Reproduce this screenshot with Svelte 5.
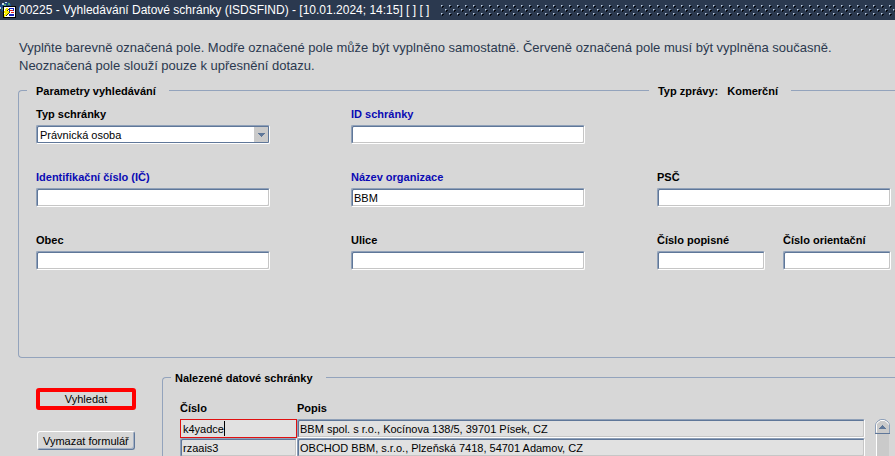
<script>
	let boxType = "Právnická osoba";
	let company = "BBM";

	const results = [
		{ id: "k4yadce", desc: "BBM spol. s r.o., Kocínova 138/5, 39701 Písek, CZ" },
		{ id: "rzaais3", desc: "OBCHOD BBM, s.r.o., Plzeňská 7418, 54701 Adamov, CZ" },
	];
	let selected = 0;

	let fields = { id: "", ic: "", psc: "", city: "", street: "", houseNo: "", orientNo: "" };

	const clearForm = () => {
		company = "";
		fields = { id: "", ic: "", psc: "", city: "", street: "", houseNo: "", orientNo: "" };
	};
</script>

<main>
	<header class="titlebar">
		<svg class="app-icon" width="17" height="20" viewBox="0 0 17 20" shape-rendering="crispEdges">
			<!-- globe -->
			<path d="M1 4h1v-1h2v-1h5v1h1v1h1v3h-6v6h-2v-1h-1v-1h-1v-2h-1v-4h1z" fill="#1d4a86" />
			<path d="M2 3h2v2h-2zM5 2h2v1h-2zM0 7h1v2h-1z" fill="#c9dce6" />
			<path d="M4 4h2v2h-2zM8 3h2v2h-2zM2 8h2v2h-2z" fill="#4f9d6c" />
			<!-- sheet -->
			<rect x="3" y="6" width="13" height="12" fill="#000" />
			<rect x="4" y="7" width="11" height="10" fill="#fff" />
			<path d="M9 8h5v1h-5zM13 9h1v2h-1zM9 9h1v3h-1zM9 14h5v2h-5z" fill="#1824c0" />
			<path d="M10 10h3v1h-3zM11 12h3v1h-3z" fill="#e02020" />
			<!-- flash -->
			<path d="M6 8h2v2h-1v1h2v2h-1v1h-1v1h-1v1h-1v1h-1v-3h1v-1h-1v-2h1v-2h1z" fill="#f8ee00" />
			<path d="M8 9h1v1h-1v1h-1v-1h1zM9 12h1v1h-1v1h-1v1h-1v1h-1v-1h1v-1h1v-1h1z" fill="#4a3c00" />
		</svg>
		<h1>00225 - Vyhledávání Datové schránky (ISDSFIND) - [10.01.2024; 14:15] [ ] [ ]</h1>
		<svg class="grip" width="100%" height="12">
			<defs>
				<pattern id="bumps" width="8" height="12" patternUnits="userSpaceOnUse" shape-rendering="crispEdges">
					<path d="M0 1h1v1h-1zM4 5h1v1h-1zM0 9h1v1h-1z" fill="#c3d0e0" />
					<path d="M1 1h1v1h-1zM0 2h1v1h-1zM5 5h1v1h-1zM4 6h1v1h-1zM1 9h1v1h-1zM0 10h1v1h-1z" fill="#7486a0" />
					<path d="M1 2h2v1h-1v1h-1zM5 6h2v1h-1v1h-1zM1 10h2v1h-1v1h-1z" fill="#05080e" />
				</pattern>
			</defs>
			<rect width="100%" height="12" fill="url(#bumps)" />
		</svg>
	</header>

	<p class="intro">
		Vyplňte barevně označená pole. Modře označené pole může být vyplněno samostatně. Červeně označená pole musí být vyplněna současně.<br />
		Neoznačená pole slouží pouze k upřesnění dotazu.
	</p>

	<section class="group params">
		<div class="caption">
			<h2>Parametry vyhledávání</h2>
			<h2 class="kind"><span>Typ zprávy:</span><span>Komerční</span></h2>
		</div>
		<div class="fields">
			<div class="field">
				<label for="type">Typ schránky</label>
				<div class="combo">
					<select id="type" class="box" bind:value={boxType}>
						<option>Právnická osoba</option>
						<option>Fyzická osoba</option>
					</select>
					<svg class="arrow" width="14" height="15" viewBox="0 0 14 15">
						<rect width="14" height="15" fill="#cacaca" />
						<path d="M4 6h7v1h-1v1h-1v1h-1v1h-1v-1h-1v-1h-1v-1h-1z" fill="#5f7799" shape-rendering="crispEdges" />
					</svg>
				</div>
			</div>
			<div class="field">
				<label class="blue" for="id">ID schránky</label>
				<input id="id" class="box" bind:value={fields.id} />
			</div>
			<div></div>

			<div class="field">
				<label class="blue" for="ic">Identifikační číslo (IČ)</label>
				<input id="ic" class="box" bind:value={fields.ic} />
			</div>
			<div class="field">
				<label class="blue" for="company">Název organizace</label>
				<input id="company" class="box" bind:value={company} />
			</div>
			<div class="field">
				<label for="psc">PSČ</label>
				<input id="psc" class="box" bind:value={fields.psc} />
			</div>

			<div class="field">
				<label for="city">Obec</label>
				<input id="city" class="box" bind:value={fields.city} />
			</div>
			<div class="field">
				<label for="street">Ulice</label>
				<input id="street" class="box" bind:value={fields.street} />
			</div>
			<div class="pair">
				<div class="field">
					<label for="houseNo">Číslo popisné</label>
					<input id="houseNo" class="box" bind:value={fields.houseNo} />
				</div>
				<div class="field">
					<label for="orientNo">Číslo orientační</label>
					<input id="orientNo" class="box" bind:value={fields.orientNo} />
				</div>
			</div>
		</div>
	</section>

	<div class="bottom">
		<div class="actions">
			<button class="search">Vyhledat</button>
			<button class="clear" on:click={clearForm}>Vymazat formulář</button>
		</div>
		<section class="group found">
			<div class="caption">
				<h2>Nalezené datové schránky</h2>
			</div>
			<div class="list">
				<table>
					<thead>
						<tr>
							<th class="col-id">Číslo</th>
							<th>Popis</th>
						</tr>
					</thead>
					<tbody>
						{#each results as row, i}
							<tr>
								<td>
									<input class="box cell" class:active={i == selected} aria-label="Číslo" value={row.id} readonly on:focus={() => (selected = i)} />
									{#if i == selected}
										<span class="caret"></span>
									{/if}
								</td>
								<td><input class="box cell" aria-label="Popis" value={row.desc} readonly /></td>
							</tr>
						{/each}
					</tbody>
				</table>
				<div class="scroll">
					<button aria-label="Nahoru">
						<svg width="15" height="15" viewBox="0 0 15 15">
							<path d="M0.5 14.5v-9l1-2 2-2 2-1h4l2 1 2 2 1 2v9z" fill="#cacaca" stroke="#8ea0ba" />
							<path d="M1.5 13.5v-8l1-2 2-1 1-1h4l1 1 2 1 1 2" fill="none" stroke="#fff" />
							<path d="M0 14.5h15" stroke="#5f7799" />
							<path d="M4 10v-1h1v-1h1v-1h1v-1h1v1h1v1h1v1h1v1z" fill="#5f7799" shape-rendering="crispEdges" />
						</svg>
					</button>
				</div>
			</div>
		</section>
	</div>
</main>

<style>
	:global(body) {
		background: #d7d7d7;
	}
	main {
		height: 100vh;
		overflow: hidden;
		background: #d7d7d7;
		color: #000;
		font-family: "Liberation Sans", Arial, sans-serif;
		font-size: 11px;
	}
	h1, h2, p {
		margin: 0;
	}
	.titlebar {
		display: flex;
		align-items: center;
		height: 20px;
		background: #2b394f;
		color: #fff;
	}
	.app-icon {
		flex: none;
		margin-right: 2px;
	}
	h1 {
		flex: none;
		font-size: 12px;
		line-height: 20px;
		font-weight: normal;
		margin-right: 12px;
	}
	.grip {
		flex: 1;
		min-width: 0;
	}
	.intro {
		padding: 19px 0 0 19px;
		font-size: 13px;
		line-height: 18px;
		color: #2b394f;
		white-space: nowrap;
	}
	.group {
		border: 1px solid #93a3bc;
		border-right: none;
		border-radius: 4px 0 0 4px;
	}
	.caption {
		display: flex;
		align-items: center;
		height: 1px;
		margin-top: -1px;
		padding-left: 8px;
	}
	h2, label, th {
		font-size: 11px;
		line-height: 16px;
		font-weight: bold;
	}
	h2 {
		padding: 0 13px 0 9px;
		background: #d7d7d7;
		white-space: nowrap;
	}
	.params {
		margin: 15px 0 0 18px;
		min-height: 266px;
	}
	.params .caption {
		justify-content: space-between;
		padding-right: 104px;
	}
	.kind {
		display: flex;
		gap: 9px;
	}
	.fields {
		display: grid;
		grid-template-columns: 315fr 306fr 234fr;
		row-gap: 25px;
		padding: 15px 4px 0 17px;
	}
	.field {
		display: flex;
		flex-direction: column;
		gap: 3px;
		max-width: 234px;
	}
	.pair {
		display: grid;
		grid-template-columns: 1fr 1fr;
		gap: 18px;
	}
	.blue {
		color: #0a0ab4;
	}
	.box {
		display: block;
		box-sizing: border-box;
		width: 100%;
		height: 19px;
		margin: 0;
		padding: 1px 2px 0;
		border: 1px solid;
		border-color: #8fa0b8 #fff #fff #8fa0b8;
		border-radius: 2px;
		box-shadow: inset 1px 1px #5f7799, inset -1px -1px #c6c6c6;
		outline: none;
		background: #fff;
		color: #000;
		font: 11px "Liberation Sans", Arial, sans-serif;
	}
	.combo {
		position: relative;
	}
	select.box {
		appearance: none;
		padding-left: 3px;
		box-shadow: inset 1px 1px #5f7799, inset -1px -1px #5f7799;
	}
	.arrow {
		position: absolute;
		right: 2px;
		top: 2px;
		pointer-events: none;
	}
	.bottom {
		display: flex;
		margin-top: 19px;
	}
	.actions {
		flex: none;
		display: flex;
		flex-direction: column;
		align-items: flex-start;
		gap: 21px;
		box-sizing: border-box;
		width: 162px;
		padding: 11px 0 0 36px;
	}
	button {
		color: #000;
		font: 11px "Liberation Sans", Arial, sans-serif;
	}
	.search {
		width: 100px;
		height: 22px;
		padding: 0;
		border: 4px solid #f00;
		border-radius: 3px;
		background: #d7d7d7;
	}
	.clear {
		height: 19px;
		margin-left: 1px;
		padding: 0 5px;
		border: 1px solid;
		border-color: #fff #5f7799 #5f7799 #fff;
		border-radius: 3px;
		box-shadow: inset -1px -1px #a3b0c4;
		background: #d7d7d7;
	}
	.found {
		flex: 1;
		border-bottom: none;
		border-bottom-left-radius: 0;
	}
	.found h2 {
		padding-left: 4px;
	}
	.list {
		display: flex;
		align-items: stretch;
		gap: 10px;
		padding: 22px 5px 0 17px;
	}
	table {
		flex: 1;
		table-layout: fixed;
		border-collapse: collapse;
	}
	th {
		padding: 0 0 3px;
		text-align: left;
	}
	.col-id {
		width: 117px;
	}
	td {
		position: relative;
		padding: 0;
	}
	.cell {
		background: #e1e1e1;
	}
	.cell.active {
		border-color: #e01010;
		border-radius: 0;
		box-shadow: none;
	}
	.caret {
		position: absolute;
		left: 44px;
		top: 2px;
		width: 1px;
		height: 15px;
		background: #000;
	}
	.scroll {
		margin-top: 19px;
		width: 15px;
		background: linear-gradient(to right, #d7d7d7 1px, #fff 1px, #fff 2px, #cacaca 2px, #cacaca 14px, #d7d7d7 14px);
	}
	.scroll button {
		display: block;
		padding: 0;
		border: none;
		background: #d7d7d7;
	}
	.scroll svg {
		display: block;
	}
</style>
